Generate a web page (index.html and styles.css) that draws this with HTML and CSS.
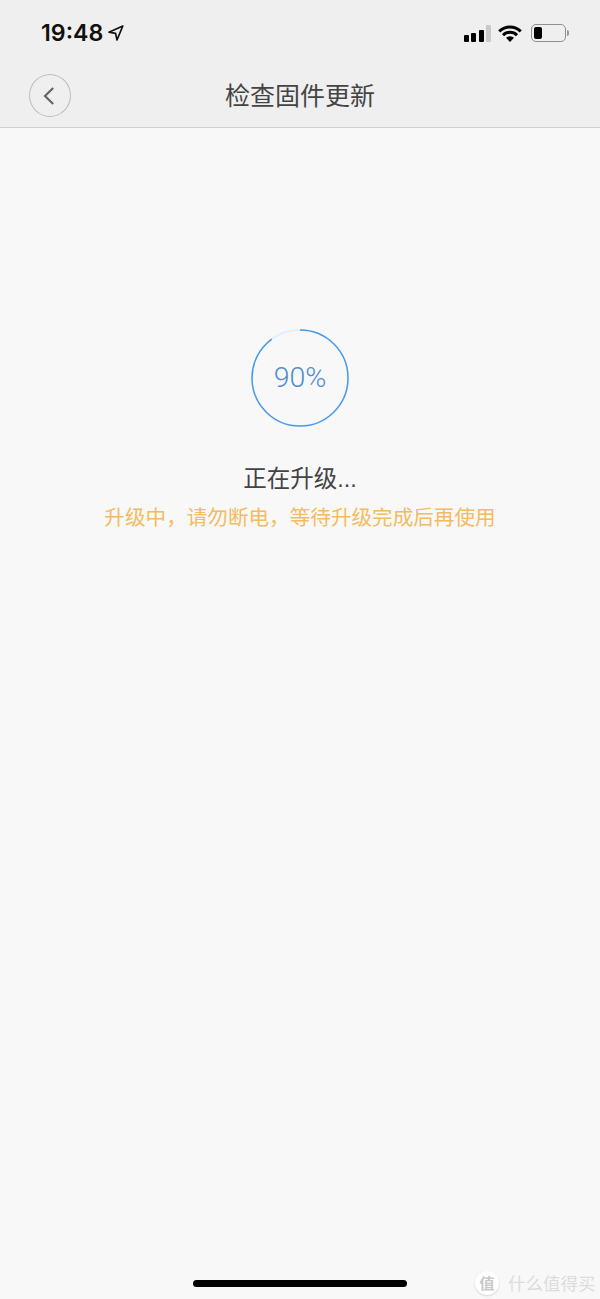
FILE: index.html
```html
<!DOCTYPE html>
<html lang="zh-CN">
<head>
    <meta charset="UTF-8">
    <meta name="viewport" content="width=device-width, initial-scale=1.0">
    <title>检查固件更新</title>
    <link rel="stylesheet" href="styles.css">
</head>
<body>
    <div class="screen">
        <header class="top-bar">
            <div class="status-bar">
                <div class="status-time">
                    <span>19:48</span>
                    <svg class="location-icon" width="16" height="16" viewBox="0 0 16 16">
                        <path d="M14.8 1 L1 7.2 L7.6 8.4 L9 15 Z" fill="none" stroke="#111" stroke-width="1.7" stroke-linejoin="round"/>
                    </svg>
                </div>
                <div class="status-icons">
                    <div class="signal">
                        <i class="bar bar-1"></i>
                        <i class="bar bar-2"></i>
                        <i class="bar bar-3"></i>
                        <i class="bar bar-4"></i>
                    </div>
                    <svg class="wifi-icon" width="24" height="17" viewBox="0 0 24 17">
                        <path d="M1.2 6.4 A15.5 15.5 0 0 1 22.8 6.4" fill="none" stroke="#000" stroke-width="3"/>
                        <path d="M5 10.2 A10 10 0 0 1 19 10.2" fill="none" stroke="#000" stroke-width="3"/>
                        <path d="M8 12.8 A5.8 5.8 0 0 1 16 12.8 L12 17 Z" fill="#000"/>
                    </svg>
                    <div class="battery">
                        <div class="battery-body"><div class="battery-level"></div></div>
                        <div class="battery-cap"></div>
                    </div>
                </div>
            </div>
            <div class="nav-bar">
                <button class="back-btn">
                    <svg width="12" height="18" viewBox="0 0 12 18">
                        <path d="M10.2 1 L2 9 L10.2 17" fill="none" stroke="#666" stroke-width="2.2"/>
                    </svg>
                </button>
                <h1 class="nav-title">检查固件更新</h1>
            </div>
        </header>

        <main class="content">
            <div class="progress-ring">
                <svg width="100" height="100" viewBox="0 0 100 100">
                    <circle cx="50" cy="50" r="48" fill="none" stroke="#deecfb" stroke-width="1.5"/>
                    <circle class="ring-value" cx="50" cy="50" r="48" fill="none" stroke="#4a9bec" stroke-width="1.5" pathLength="100" stroke-dasharray="90 100"/>
                </svg>
                <span class="progress-text">90%</span>
            </div>
            <p class="status-title">正在升级...</p>
            <p class="status-note">升级中，请勿断电，等待升级完成后再使用</p>
        </main>

        <footer class="bottom-area">
            <div class="home-bar"></div>
            <div class="watermark">
                <span class="watermark-badge">值</span>
                <span class="watermark-text">什么值得买</span>
            </div>
        </footer>
    </div>
</body>
</html>
```

FILE: styles.css
```css
html, body {
    margin: 0;
    padding: 0;
}

body {
    font-family: "Liberation Sans", "Noto Sans CJK SC", sans-serif;
    background-color: #f8f8f8;
}

.screen {
    display: flex;
    flex-direction: column;
    height: 1299px;
    overflow: hidden;
}

.top-bar {
    background-color: #efefef;
    border-bottom: 1px solid #cfcfcf;
    height: 127px;
    flex-shrink: 0;
}

.status-bar {
    display: flex;
    justify-content: space-between;
    align-items: center;
    height: 66px;
    padding: 0 31px 0 41px;
}

.status-time {
    display: flex;
    align-items: center;
    gap: 5px;
    font-family: Inter, "Liberation Sans", sans-serif;
    font-size: 23.2px;
    font-weight: 600;
    color: #111;
}

.status-icons {
    display: flex;
    align-items: center;
}

.signal {
    display: flex;
    align-items: flex-end;
    gap: 2.5px;
    height: 17px;
    margin-right: 7px;
}

.bar {
    display: block;
    width: 5px;
    background-color: #000;
    border-radius: 1px;
}

.bar-1 { height: 7px; }
.bar-2 { height: 9px; }
.bar-3 { height: 12px; }
.bar-4 { height: 17px; background-color: #c9c9c9; }

.wifi-icon {
    margin-right: 9px;
}

.battery {
    display: flex;
    align-items: center;
}

.battery-body {
    box-sizing: border-box;
    width: 35px;
    height: 18px;
    padding: 2px;
    border: 1.5px solid #8f8f8f;
    border-radius: 5px;
}

.battery-level {
    width: 8px;
    height: 100%;
    background-color: #000;
    border-radius: 2px;
}

.battery-cap {
    width: 2px;
    height: 6px;
    margin-left: 1px;
    background-color: #9a9a9a;
    border-radius: 0 2px 2px 0;
}

.nav-bar {
    position: relative;
    display: flex;
    align-items: center;
    justify-content: center;
    height: 56px;
}

.back-btn {
    position: absolute;
    left: 29px;
    top: 8px;
    box-sizing: border-box;
    display: flex;
    align-items: center;
    justify-content: center;
    width: 42px;
    height: 43px;
    padding: 0 3px 0 0;
    background: none;
    border: 1px solid #bdbdbd;
    border-radius: 50%;
}

.nav-title {
    margin: 0;
    font-size: 25px;
    font-weight: 400;
    color: #444;
}

.content {
    flex: 1;
    display: flex;
    flex-direction: column;
    align-items: center;
    padding-top: 200px;
}

.progress-ring {
    position: relative;
    width: 100px;
    height: 100px;
}

.ring-value {
    transform: rotate(-90deg);
    transform-origin: center;
}

.progress-text {
    position: absolute;
    inset: 0 0 2px;
    display: flex;
    align-items: center;
    justify-content: center;
    font-family: Roboto, sans-serif;
    font-size: 28.5px;
    font-weight: 300;
    color: #4f8dd0;
}

.status-title {
    margin: 35px 0 0;
    font-size: 23.5px;
    line-height: 32px;
    color: #444;
}

.status-note {
    margin: 8px 0 0;
    font-size: 20.6px;
    line-height: 29px;
    color: #f4bb62;
}

.bottom-area {
    position: relative;
    height: 38px;
    flex-shrink: 0;
}

.home-bar {
    width: 214px;
    height: 7px;
    margin: 19px 0 0 193px;
    background-color: #000;
    border-radius: 4px;
}

.watermark {
    position: absolute;
    left: 475px;
    top: 9px;
    display: flex;
    align-items: center;
    gap: 9px;
    color: #dcdcdc;
}

.watermark-badge {
    display: flex;
    align-items: center;
    justify-content: center;
    width: 24px;
    height: 24px;
    font-size: 15px;
    font-weight: 700;
    color: #c8c8c8;
    background-color: #fff;
    border-radius: 50%;
    box-shadow: 0 1px 2px rgba(0, 0, 0, 0.15);
}

.watermark-text {
    font-size: 17.5px;
}
```
